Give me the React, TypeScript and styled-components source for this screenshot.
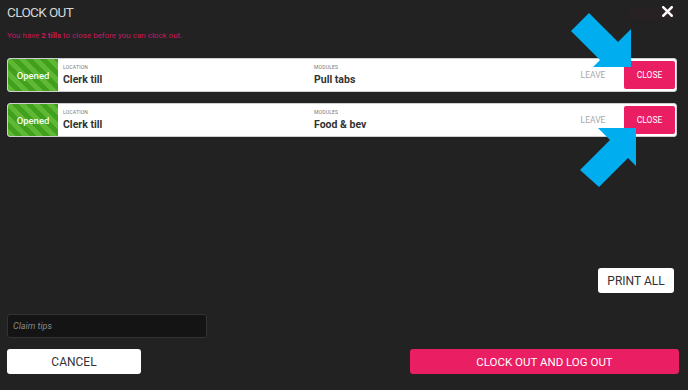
import React from "react";
import styled, { createGlobalStyle } from "styled-components";

const Global = createGlobalStyle`
  html, body { margin: 0; padding: 0; background: #222222; }
  * { box-sizing: border-box; }
  body { font-family: Roboto, "Liberation Sans", sans-serif; }
`;

const Page = styled.div`
  position: relative;
  width: 688px;
  height: 390px;
  background: #222222;
  display: flex;
  flex-direction: column;
  padding: 0 11px 16px 7px;
  overflow: hidden;
`;

const Header = styled.div`
  display: flex;
  align-items: center;
  justify-content: space-between;
  height: 23px;
  margin-right: 4px;
`;

const Title = styled.h1`
  margin: 0;
  font-size: 13.5px;
  font-weight: 400;
  color: #d6d6d6;
  letter-spacing: -0.6px;
`;

const CloseX = styled.button`
  border: none;
  background: none;
  padding: 0;
  display: flex;
`;

const Message = styled.p`
  margin: 8px 0 0;
  font-size: 8px;
  color: #c8175a;
  b { font-weight: 700; }
`;

const TillList = styled.div`
  display: flex;
  flex-direction: column;
  gap: 11px;
  margin-top: 18px;
`;

const Card = styled.div`
  display: flex;
  align-items: stretch;
  height: 34px;
  background: #fff;
  border: 1px solid #cfcfcf;
  border-radius: 3px;
  overflow: hidden;
`;

const Status = styled.div`
  width: 50px;
  display: flex;
  align-items: center;
  justify-content: center;
  color: #f4fff0;
  font-size: 9.5px;
  font-weight: 500;
  background: repeating-linear-gradient(
    45deg,
    #5fb833 0 5px,
    #41a01e 5px 10px
  );
`;

const Field = styled.div<{ $width: number }>`
  width: ${(p) => p.$width}px;
  display: flex;
  flex-direction: column;
  justify-content: center;
  padding-left: 5px;
  gap: 3px;
`;

const FieldLabel = styled.span`
  font-size: 5px;
  color: #777;
  letter-spacing: 0.2px;
`;

const FieldValue = styled.span`
  font-size: 10.5px;
  font-weight: 700;
  color: #333;
`;

const Actions = styled.div`
  margin-left: auto;
  display: flex;
  align-items: stretch;
  padding: 2px 1px 2px 0;
`;

const LeaveButton = styled.button`
  border: none;
  background: #fff;
  color: #a8a8a8;
  font-family: inherit;
  font-size: 8.5px;
  width: 44px;
  margin-right: 7px;
  padding: 0 4px 0 0;
`;

const CloseButton = styled.button`
  border: none;
  background: #e91e63;
  color: #fff;
  font-family: inherit;
  font-size: 8.5px;
  width: 51px;
  border-radius: 2px;
  padding: 0;
`;

const Spacer = styled.div`
  flex: 1;
`;

const PrintRow = styled.div`
  display: flex;
  justify-content: flex-end;
  margin-right: 3px;
`;

const WhiteButton = styled.button<{ $width: number }>`
  width: ${(p) => p.$width}px;
  height: 25px;
  border: none;
  border-radius: 3px;
  background: #fff;
  color: #333;
  font-family: inherit;
  font-size: 12px;
  padding: 0;
`;

const TipsInput = styled.input`
  width: 200px;
  height: 24px;
  margin-top: 21px;
  background: #141414;
  border: 1px solid #333;
  border-radius: 3px;
  padding: 0 5px;
  color: #ccc;
  font-family: inherit;
  font-size: 9px;
  font-style: italic;
  &::placeholder { color: #888; }
`;

const Footer = styled.div`
  display: flex;
  justify-content: space-between;
  margin-top: 11px;
  margin-right: -2px;
`;

const PinkButton = styled.button`
  width: 269px;
  height: 25px;
  border: none;
  border-radius: 3px;
  background: #e91e63;
  color: #fff;
  font-family: inherit;
  font-size: 11.5px;
  padding: 0;
`;

const GhostBadge = styled.div`
  position: absolute;
  top: 7px;
  right: 12px;
  width: 48px;
  height: 13px;
  border-radius: 3px;
  background: rgba(233, 30, 99, 0.035);
`;

const ArrowLayer = styled.svg`
  position: absolute;
  inset: 0;
  pointer-events: none;
`;

const tills = [
  { location: "Clerk till", modules: "Pull tabs" },
  { location: "Clerk till", modules: "Food & bev" },
];

export default function App() {
  return (
    <>
      <Global />
      <Page>
        <GhostBadge />
        <Header>
          <Title>CLOCK OUT</Title>
          <CloseX aria-label="close">
            <svg width="11" height="11" viewBox="0 0 11 11">
              <path d="M1.3 1.3 L9.7 9.7 M9.7 1.3 L1.3 9.7" stroke="#fff" strokeWidth="2.6" strokeLinecap="square" />
            </svg>
          </CloseX>
        </Header>
        <Message>
          You have <b>2 tills</b> to close before you can clock out.
        </Message>
        <TillList>
          {tills.map((t, i) => (
            <Card key={i}>
              <Status>Opened</Status>
              <Field $width={251}>
                <FieldLabel>LOCATION</FieldLabel>
                <FieldValue>{t.location}</FieldValue>
              </Field>
              <Field $width={200}>
                <FieldLabel>MODULES</FieldLabel>
                <FieldValue>{t.modules}</FieldValue>
              </Field>
              <Actions>
                <LeaveButton>LEAVE</LeaveButton>
                <CloseButton>CLOSE</CloseButton>
              </Actions>
            </Card>
          ))}
        </TillList>
        <Spacer />
        <PrintRow>
          <WhiteButton $width={76}>PRINT ALL</WhiteButton>
        </PrintRow>
        <TipsInput placeholder="Claim tips" />
        <Footer>
          <WhiteButton $width={134}>CANCEL</WhiteButton>
          <PinkButton>CLOCK OUT AND LOG OUT</PinkButton>
        </Footer>
        <ArrowLayer width="688" height="390" viewBox="0 0 688 390">
          <polygon
            fill="#00aeef"
            points="571,31 589,13 618,42 631,29 631,67 593,67 600,60"
          />
          <polygon
            fill="#00aeef"
            points="580,170 610,140 598,128 636,128 636,166 628,158 599,187"
          />
        </ArrowLayer>
      </Page>
    </>
  );
}
